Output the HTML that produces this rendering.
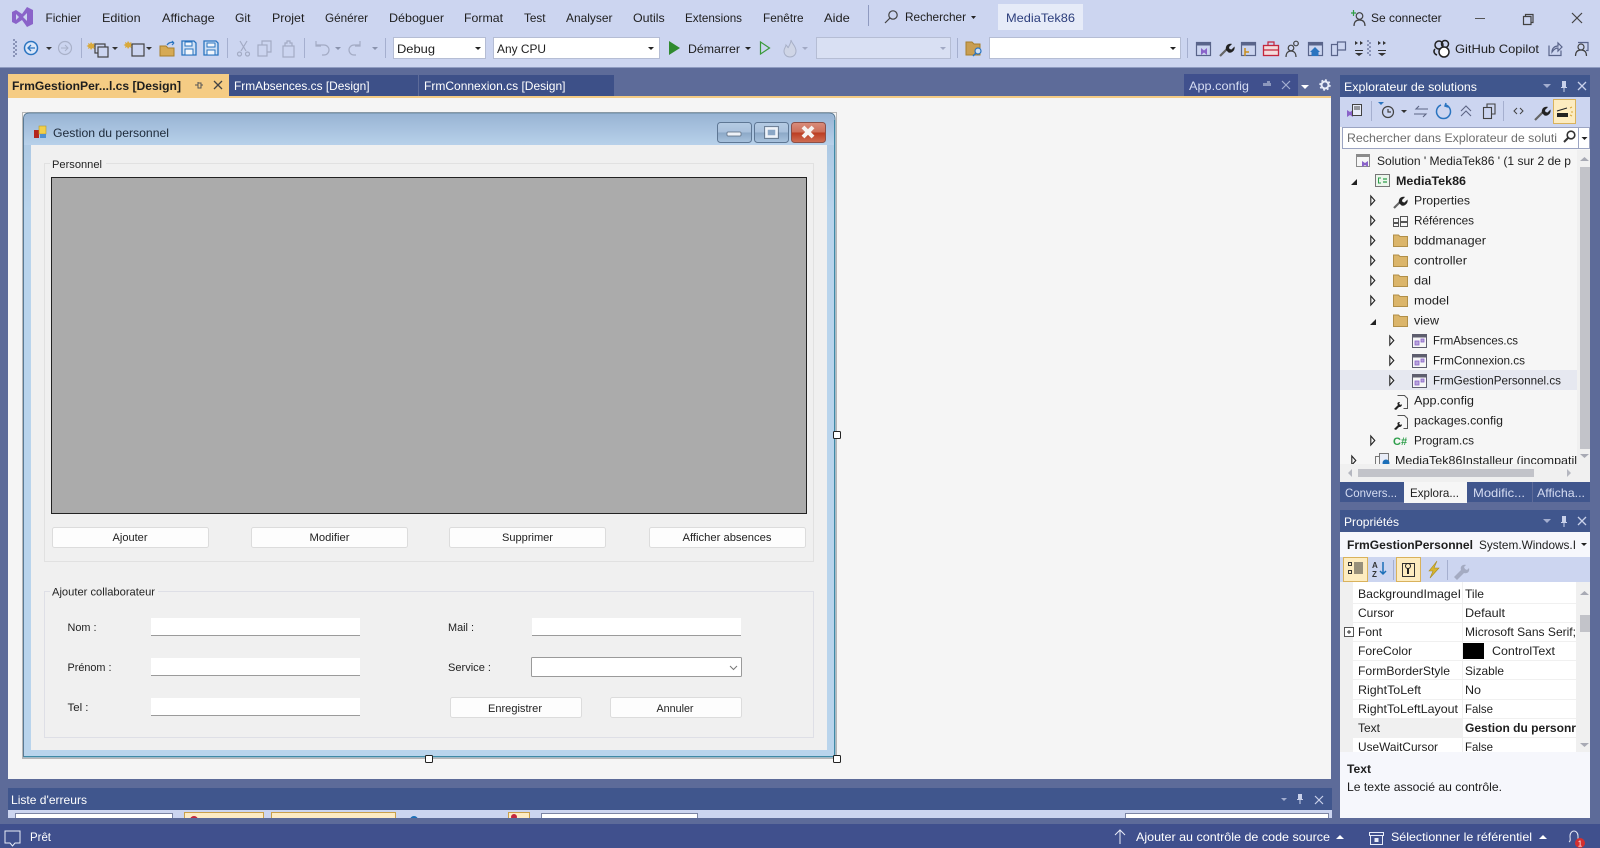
<!DOCTYPE html>
<html lang="fr">
<head>
<meta charset="utf-8">
<title>MediaTek86 - Visual Studio</title>
<style>
html,body{margin:0;padding:0;width:1600px;height:848px;overflow:hidden;background:#5d6b99}
svg{display:block;position:absolute;left:0;top:0;filter:blur(.3px)}
text{font-family:"Liberation Sans",sans-serif;font-size:12px;fill:#1e1e1e;white-space:pre}
.w text,text.w{fill:#fff}
.l text,text.l{fill:#d5dcf2}
.f text{font-size:11px;fill:#222}
.b{font-weight:bold}
.m{text-anchor:middle}
.s{fill:none;stroke:#424242;stroke-width:1.2}
.btn{fill:#fdfdfd;stroke:#dcdcdc;stroke-width:1}
</style>
</head>
<body>
<svg width="1600" height="848" viewBox="0 0 1600 848" xmlns="http://www.w3.org/2000/svg">
<defs>
<linearGradient id="cap" x1="0" y1="0" x2="0" y2="1"><stop offset="0" stop-color="#98b4d4"/><stop offset="1" stop-color="#b8d1ea"/></linearGradient>
<linearGradient id="side" x1="0" y1="0" x2="0" y2="1"><stop offset="0" stop-color="#a8c4e0"/><stop offset=".15" stop-color="#b9d4ec"/><stop offset="1" stop-color="#b9d4ec"/></linearGradient>
<linearGradient id="cb" x1="0" y1="0" x2="0" y2="1"><stop offset="0" stop-color="#b5cbe3"/><stop offset=".5" stop-color="#a8c0db"/><stop offset=".5" stop-color="#8ba7c6"/><stop offset="1" stop-color="#a9c3de"/></linearGradient>
<linearGradient id="cr" x1="0" y1="0" x2="0" y2="1"><stop offset="0" stop-color="#d98d7c"/><stop offset=".5" stop-color="#cc6e58"/><stop offset=".5" stop-color="#bb3b20"/><stop offset="1" stop-color="#cf6f55"/></linearGradient>
</defs>

<!-- chrome -->
<rect width="1600" height="848" fill="#5d6b99"/>
<rect width="1600" height="67" fill="#ccd5f0"/>
<rect y="67" width="1600" height="1" fill="#8e9bc0"/>

<!-- VS logo -->
<path d="M12 12l4-2 6 4 5-7 6 3v14l-6 3-5-7-6 4-4-2zM16 14v6l3-3zM27 13l-4 4 4 4z" fill="#8a63c9" fill-rule="evenodd"/>

<!-- menu -->
<g>
<text x="45.5" y="22" textLength="35.5" lengthAdjust="spacingAndGlyphs">Fichier</text>
<text x="102" y="22" textLength="38.6" lengthAdjust="spacingAndGlyphs">Edition</text>
<text x="162" y="22" textLength="52.7" lengthAdjust="spacingAndGlyphs">Affichage</text>
<text x="235" y="22" textLength="15.5" lengthAdjust="spacingAndGlyphs">Git</text>
<text x="272" y="22" textLength="32.4" lengthAdjust="spacingAndGlyphs">Projet</text>
<text x="325" y="22" textLength="43" lengthAdjust="spacingAndGlyphs">Générer</text>
<text x="389" y="22" textLength="55" lengthAdjust="spacingAndGlyphs">Déboguer</text>
<text x="464" y="22" textLength="39" lengthAdjust="spacingAndGlyphs">Format</text>
<text x="524" y="22" textLength="21.5" lengthAdjust="spacingAndGlyphs">Test</text>
<text x="566" y="22" textLength="46.5" lengthAdjust="spacingAndGlyphs">Analyser</text>
<text x="633" y="22" textLength="31.7" lengthAdjust="spacingAndGlyphs">Outils</text>
<text x="685" y="22" textLength="57" lengthAdjust="spacingAndGlyphs">Extensions</text>
<text x="763" y="22" textLength="40.6" lengthAdjust="spacingAndGlyphs">Fenêtre</text>
<text x="824" y="22" textLength="25.8" lengthAdjust="spacingAndGlyphs">Aide</text>
</g>
<rect x="868" y="5" width="1" height="21" fill="#8f9ac0"/>
<circle cx="893" cy="15" r="4.2" class="s"/><path d="M890 18l-5 5" class="s" stroke-width="1.6"/>
<text x="905" y="21" textLength="61" lengthAdjust="spacingAndGlyphs">Rechercher</text>
<path d="M971 16h5l-2.500 3z" fill="#222"/>
<rect x="998" y="4" width="85" height="26" fill="#e6ebf8"/>
<text x="1006" y="22" textLength="69" lengthAdjust="spacingAndGlyphs" style="fill:#2c3e7c">MediaTek86</text>

<!-- sign in + window controls -->
<path d="M1351 13h5M1353.500 10v6" stroke="#2f9e44" stroke-width="1.200" fill="none"/>
<circle cx="1359.500" cy="16" r="3.300" class="s"/><path d="M1354 26c0-4 2-6 5.500-6s5.500 2 5.500 6" class="s"/>
<text x="1371" y="22" textLength="70.600" lengthAdjust="spacingAndGlyphs">Se connecter</text>
<rect x="1475" y="18" width="10" height="1" fill="#555"/>
<path d="M1523.500 16.500h7.500v8h-7.500zM1525.500 16.500v-2h7.500v8h-2" class="s" stroke-width="1"/>
<path d="M1572 13l10 10M1582 13l-10 10" class="s" stroke-width="1"/>

<!-- toolbar -->
<g fill="#8a94b8"><rect x="13" y="39" width="2" height="2"/><rect x="15" y="41" width="2" height="2"/><rect x="13" y="43" width="2" height="2"/><rect x="15" y="45" width="2" height="2"/><rect x="13" y="47" width="2" height="2"/><rect x="15" y="49" width="2" height="2"/><rect x="13" y="51" width="2" height="2"/><rect x="15" y="53" width="2" height="2"/><rect x="13" y="55" width="2" height="2"/></g>
<circle cx="31" cy="48" r="6.500" fill="#dbe6f8" stroke="#2a74c0" stroke-width="1.500"/><path d="M35 48h-7M31 45l-3 3 3 3" fill="none" stroke="#2a74c0" stroke-width="1.300"/>
<path d="M46 47h6l-3 3z" fill="#333"/>
<circle cx="65" cy="48" r="6.500" fill="none" stroke="#a9b1c9" stroke-width="1.200"/><path d="M61 48h7M65 45l3 3-3 3" fill="none" stroke="#a9b1c9" stroke-width="1"/>
<rect x="81" y="38" width="1" height="20" fill="#a5afcf"/>
<path d="M91 42l1.500 2 2-1-.5 2 2 1-2 1 .5 2-2-1-1.500 2-1-2-2 1 .5-2-2-1 2-1-.5-2 2 1z" fill="#d9a93c"/>
<rect x="95" y="44" width="10" height="9" class="s"/><rect x="98" y="47" width="10" height="10" fill="#ccd5f0" stroke="#424242" stroke-width="1.200"/>
<path d="M112 47h6l-3 3z" fill="#333"/>
<path d="M128 41l1.500 2 2-1-.5 2 2 1-2 1 .5 2-2-1-1.500 2-1-2-2 1 .5-2-2-1 2-1-.5-2 2 1z" fill="#d9a93c"/>
<rect x="132" y="44" width="12" height="12" class="s"/>
<path d="M146 47h6l-3 3z" fill="#333"/>
<path d="M160 46h6l2 2h6v8h-14z" fill="#d6aa55" stroke="#a87f2c"/><path d="M167 45c2-3 5-3 7-2m0 0l-2-2m2 2l-2 2" fill="none" stroke="#2a74c0" stroke-width="1.200"/>
<path d="M182 41h12l2 2v12h-14z" fill="#cfe0f5" stroke="#2a74c0" stroke-width="1.300"/><rect x="185" y="42" width="7" height="4" fill="#f2f6fc" stroke="#2a74c0"/><rect x="185" y="49" width="8" height="6" fill="#f2f6fc" stroke="#2a74c0"/>
<path d="M204 41h12l2 2v12h-14z" fill="#cfe0f5" stroke="#2a74c0" stroke-width="1.300"/><rect x="207" y="43" width="8" height="4" fill="#f2f6fc" stroke="#2a74c0"/><rect x="207" y="50" width="8" height="5" fill="#f2f6fc" stroke="#2a74c0"/>
<rect x="227" y="38" width="1" height="20" fill="#a5afcf"/>
<g fill="none" stroke="#a3abc4" stroke-width="1.200">
<path d="M240 41l6 10M247 41l-6 10"/><circle cx="239.500" cy="54" r="2"/><circle cx="247.500" cy="54" r="2"/>
<rect x="258" y="45" width="9" height="11"/><path d="M262 45v-4h9v11h-4"/>
<rect x="283" y="46" width="11" height="11"/><path d="M285 46v-3h2v-2h3v2h2v3"/>
<path d="M316 45h8a5 5 0 0 1 0 10h-2M316 41v5h5"/>
<path d="M360 45h-6a5 5 0 0 0 0 10h2M360 41v5h-5"/>
</g>
<rect x="304" y="38" width="1" height="20" fill="#a5afcf"/>
<path d="M335 47h6l-3 3zM372 47h6l-3 3z" fill="#8a93ad"/>
<rect x="385" y="38" width="1" height="20" fill="#a5afcf"/>
<rect x="393.500" y="37.500" width="92" height="21" fill="#fff" stroke="#b5bdd4"/>
<text x="397" y="53" textLength="38" lengthAdjust="spacingAndGlyphs">Debug</text><path d="M475 47h6l-3 3z" fill="#222"/>
<rect x="493.500" y="37.500" width="166" height="21" fill="#fff" stroke="#b5bdd4"/>
<text x="497" y="53" textLength="49" lengthAdjust="spacingAndGlyphs">Any CPU</text><path d="M648 47h6l-3 3z" fill="#222"/>
<path d="M669 41l11 7-11 7z" fill="#2f8a2f"/>
<text x="688" y="53" textLength="52" lengthAdjust="spacingAndGlyphs">Démarrer</text><path d="M745 47h6l-3 3z" fill="#222"/>
<path d="M760.500 42l9 6-9 6z" fill="none" stroke="#3a9a3a" stroke-width="1.200"/>
<path d="M791 40c1 4 5 6 5 11 0 4-3 6-6 6s-6-2-6-6c0-3 2-4 2-6 1 1 2 2 2 3 1-2 3-5 3-8z" fill="#cfd5e6" stroke="#a8b0c7"/>
<path d="M802 47h6l-3 3z" fill="#a1a9c4"/>
<rect x="816.500" y="37.500" width="134" height="21" fill="#d9e0f3" stroke="#b5bdd4"/><path d="M940 47h6l-3 3z" fill="#a1a9c4"/>
<rect x="957" y="38" width="1" height="20" fill="#a5afcf"/>
<path d="M966 42h6l2 2h6v11h-14z" fill="#c99e52" stroke="#a87f2c"/><circle cx="978" cy="51" r="3" fill="#cfe0f5" stroke="#2a74c0" stroke-width="1.200"/><path d="M976 53l-3 3" stroke="#2a74c0" stroke-width="1.500"/>
<rect x="989.500" y="37.500" width="191" height="21" fill="#fff" stroke="#b5bdd4"/><path d="M1170 47h6l-3 3z" fill="#222"/>
<rect x="1187" y="38" width="1" height="20" fill="#a5afcf"/>
<rect x="1196.500" y="42.500" width="14" height="13" fill="none" stroke="#59648a" stroke-width="1.200"/><rect x="1196" y="42" width="15" height="3.500" fill="#59648a"/><path d="M1201 48l3 2.500 3-2.500v7l-3-2.500-3 2.500z" fill="#8a63c9"/>
<path d="M1220 56l7-7" stroke="#666" stroke-width="2.200"/><path d="M1226 50c-1-4 2-7 6-6l-3 3 .5 2 2 .5 3-3c1 4-3 7-6 6z" fill="#222"/>
<rect x="1241.500" y="42.500" width="14" height="13" fill="none" stroke="#59648a" stroke-width="1.200"/><rect x="1241" y="42" width="15" height="3.500" fill="#59648a"/><path d="M1245 48v8M1245 52h4" stroke="#c98e1c" stroke-width="1.500" fill="none"/>
<rect x="1263.500" y="45.500" width="15" height="10" fill="#f3dcdc" stroke="#c4263c" stroke-width="1.300"/><path d="M1268 45v-3h6v3M1263 50h15" fill="none" stroke="#c4263c" stroke-width="1.200"/>
<circle cx="1291" cy="48" r="2.800" class="s"/><path d="M1286 57c0-4 2-6 5-6s5 2 5 6" class="s"/><circle cx="1296" cy="43.500" r="2.300" class="s" stroke-width="1"/>
<rect x="1308.500" y="42.500" width="14" height="13" fill="none" stroke="#59648a" stroke-width="1.200"/><rect x="1308" y="42" width="15" height="3.500" fill="#59648a"/><path d="M1315 47l-5 5h1.500v4h7v-4h1.500z" fill="#2a74c0"/>
<path d="M1331.500 44.500h6v11h-6zM1337.500 46v-4h8v8h-8" fill="none" stroke="#59648a" stroke-width="1.200"/>
<path d="M1355 41l3 2-3 2zM1360 41l3 2-3 2zM1355 50h8v1h-8zM1355 53h8l-4 3zM1378 41l3 2-3 2zM1383 41l3 2-3 2zM1378 50h8v1h-8zM1378 53h8l-4 3z" fill="#333"/>
<g fill="#8a94b8"><rect x="1367" y="40" width="2" height="2"/><rect x="1369" y="42" width="2" height="2"/><rect x="1367" y="44" width="2" height="2"/><rect x="1369" y="46" width="2" height="2"/><rect x="1367" y="48" width="2" height="2"/><rect x="1369" y="50" width="2" height="2"/><rect x="1367" y="52" width="2" height="2"/><rect x="1369" y="54" width="2" height="2"/></g>
<circle cx="1439" cy="45" r="4" fill="none" stroke="#222" stroke-width="1.500"/><circle cx="1445" cy="44" r="3.500" fill="none" stroke="#222" stroke-width="1.500"/><circle cx="1444" cy="52" r="5" fill="#fff" stroke="#222" stroke-width="1.500"/><path d="M1435 49c-2 2-1 5 2 6" fill="none" stroke="#222" stroke-width="1.500"/>
<text x="1455" y="53" textLength="84" lengthAdjust="spacingAndGlyphs">GitHub Copilot</text>
<path d="M1549 45.500v10h12v-5M1552 52c0-4 3-6 6-6v-3l4 4-4 4v-3c-2 0-4 1-6 4z" fill="none" stroke="#59648a" stroke-width="1.200"/>
<circle cx="1581" cy="47" r="3" class="s"/><path d="M1575.500 56c0-4 2-6 5.500-6s5.500 2 5.500 6" class="s"/><path d="M1578 42.500h10v8h-2" fill="none" stroke="#59648a" stroke-width="1.200"/>

<!-- doc tabs -->
<rect x="8" y="74" width="221" height="22" fill="#f5cc84"/>
<text x="12" y="90" textLength="169" lengthAdjust="spacingAndGlyphs" class="b">FrmGestionPer...l.cs [Design]</text>
<path d="M195 85h3M198 82v6h3v-5h-3M201 85h2" fill="none" stroke="#555" stroke-width="1"/>
<path d="M214 81l8 8M222 81l-8 8" stroke="#444" stroke-width="1.300"/>
<rect x="229" y="75" width="385" height="21" fill="#3d5088"/>
<rect x="418" y="75" width="1" height="21" fill="#5d6b99"/>
<text x="234" y="90" textLength="135.500" lengthAdjust="spacingAndGlyphs" class="w">FrmAbsences.cs [Design]</text>
<text x="424" y="90" textLength="141.500" lengthAdjust="spacingAndGlyphs" class="w">FrmConnexion.cs [Design]</text>
<rect x="1184" y="74" width="114" height="22" fill="#40508d"/>
<text x="1189" y="90" textLength="60" lengthAdjust="spacingAndGlyphs" class="l">App.config</text>
<path d="M1263 83h4v-2h3v2h1v3h-8z" fill="#8c97bd"/>
<path d="M1282 81l8 8M1290 81l-8 8" stroke="#a3aed0" stroke-width="1.200"/>
<path d="M1301 85h8l-4 4z" fill="#fff"/>
<circle cx="1325" cy="85" r="3.500" fill="none" stroke="#e8ecf8" stroke-width="2"/><circle cx="1325" cy="85" r="5" fill="none" stroke="#e8ecf8" stroke-width="1.400" stroke-dasharray="2 1.900"/>

<!-- document well -->
<rect x="8" y="96" width="1323" height="2" fill="#f5cc84"/>
<rect x="8" y="98" width="1323" height="681" fill="#f5f5f5"/>

<!-- winform window -->
<rect x="22.500" y="112.500" width="814" height="646" fill="none" stroke="#777" stroke-dasharray="1 1"/>
<path d="M23.500 757V119q0-6 6-6H829q6 0 6 6V757z" fill="url(#side)" stroke="#5a7a94"/>
<path d="M24 145V119q0-5 5-5H829q5 0 5 5V145z" fill="url(#cap)"/>
<rect x="31" y="145" width="796" height="605" fill="#f0f0f0"/>
<rect x="24" y="756" width="811" height="1.200" fill="#3f8aa6"/>
<rect x="834" y="120" width="1.200" height="637" fill="#3f8aa6"/>
<rect x="34" y="130" width="5" height="8" fill="#b3261e"/><rect x="39" y="126" width="7" height="8" fill="#f2cf4a" stroke="#b59a2a" stroke-width=".6"/><rect x="40" y="134" width="6" height="4" fill="#4f8fd0"/>
<text x="53" y="137" textLength="116" lengthAdjust="spacingAndGlyphs" style="fill:#1d2a3a">Gestion du personnel</text>

<rect x="717.500" y="122.500" width="34" height="20" rx="3" fill="url(#cb)" stroke="#5e7794"/>
<rect x="727" y="132" width="14" height="4" rx="1" fill="#eef2f8" stroke="#55657a" stroke-width=".7"/>
<rect x="754.500" y="122.500" width="34" height="20" rx="3" fill="url(#cb)" stroke="#5e7794"/>
<rect x="766.500" y="128.500" width="10" height="8" fill="#8ba7c6" stroke="#f0f3f8" stroke-width="2.500"/><rect x="764.500" y="126.500" width="14" height="12" fill="none" stroke="#55657a" stroke-width=".7"/>
<rect x="791.500" y="122.500" width="34" height="20" rx="3" fill="url(#cr)" stroke="#8c5048"/>
<path d="M803 127l10 10M813 127l-10 10" stroke="#f6f3f2" stroke-width="4"/>

<!-- form content -->
<g class="f">
<rect x="44.500" y="163.500" width="769" height="398" fill="none" stroke="#e1e1e1"/>
<rect x="50" y="158" width="56" height="12" fill="#f0f0f0"/>
<text x="52" y="168" textLength="50" lengthAdjust="spacingAndGlyphs">Personnel</text>
<rect x="51.500" y="177.500" width="755" height="336" fill="#ababab" stroke="#222"/>
<rect x="52.500" y="527.500" width="156" height="20" rx="2" class="btn"/><text x="130" y="541" class="m" textLength="35" lengthAdjust="spacingAndGlyphs">Ajouter</text>
<rect x="251.500" y="527.500" width="156" height="20" rx="2" class="btn"/><text x="329.500" y="541" class="m" textLength="40" lengthAdjust="spacingAndGlyphs">Modifier</text>
<rect x="449.500" y="527.500" width="156" height="20" rx="2" class="btn"/><text x="527.500" y="541" class="m" textLength="51" lengthAdjust="spacingAndGlyphs">Supprimer</text>
<rect x="649.500" y="527.500" width="156" height="20" rx="2" class="btn"/><text x="727" y="541" class="m" textLength="89" lengthAdjust="spacingAndGlyphs">Afficher absences</text>

<rect x="44.500" y="591.500" width="769" height="146" fill="none" stroke="#dedfe6"/>
<rect x="50" y="586" width="108" height="12" fill="#f0f0f0"/>
<text x="52" y="595.500" textLength="103" lengthAdjust="spacingAndGlyphs">Ajouter collaborateur</text>
<text x="67.500" y="631" textLength="29" lengthAdjust="spacingAndGlyphs">Nom :</text>
<text x="67.500" y="671" textLength="44" lengthAdjust="spacingAndGlyphs">Prénom :</text>
<text x="67.500" y="711" textLength="21" lengthAdjust="spacingAndGlyphs">Tel :</text>
<rect x="151" y="618" width="209" height="17" fill="#fff"/><rect x="151" y="635" width="209" height="1" fill="#9b9b9b"/>
<rect x="151" y="658" width="209" height="17" fill="#fff"/><rect x="151" y="675" width="209" height="1" fill="#9b9b9b"/>
<rect x="151" y="698" width="209" height="17" fill="#fff"/><rect x="151" y="715" width="209" height="1" fill="#9b9b9b"/>
<text x="448" y="631" textLength="26" lengthAdjust="spacingAndGlyphs">Mail :</text>
<text x="448" y="671" textLength="43" lengthAdjust="spacingAndGlyphs">Service :</text>
<rect x="532" y="618" width="209" height="17" fill="#fff"/><rect x="532" y="635" width="209" height="1" fill="#9b9b9b"/>
<rect x="531.500" y="657.500" width="210" height="19" rx="1" fill="#fff" stroke="#9a9a9a"/>
<path d="M730 666l3.500 3.500 3.500-3.500" fill="none" stroke="#777"/>
<rect x="450.500" y="697.500" width="131" height="20" rx="2" class="btn"/><text x="515" y="712" class="m" textLength="54" lengthAdjust="spacingAndGlyphs">Enregistrer</text>
<rect x="610.500" y="697.500" width="131" height="20" rx="2" class="btn"/><text x="675" y="712" class="m" textLength="37" lengthAdjust="spacingAndGlyphs">Annuler</text>
</g>
<!-- selection handles -->
<g fill="#fff" stroke="#222"><rect x="425.500" y="755.500" width="7" height="7" rx="1"/><rect x="833.500" y="755.500" width="7" height="7" rx="1"/><rect x="833.500" y="431.500" width="7" height="7" rx="1"/></g>

<!-- error list -->
<rect x="8" y="788" width="1324" height="22" fill="#40568d"/>
<text x="11" y="804" textLength="76" lengthAdjust="spacingAndGlyphs" class="w">Liste d'erreurs</text>
<path d="M1281 798h6l-3 3z" fill="#a3aed0"/>
<path d="M1298 794h4v5h1v1h-2.500v4h-1v-4H1297v-1h1z" fill="#c9d1ea"/>
<path d="M1315 796l8 8M1323 796l-8 8" stroke="#c9d1ea" stroke-width="1.200"/>
<rect x="8" y="810" width="1324" height="8" fill="#ccd5f0"/>
<rect x="15.500" y="813.500" width="157" height="6" fill="#fff" stroke="#7b84a3"/>
<rect x="184.500" y="812.500" width="79" height="7" fill="#fdebc4" stroke="#c9a04c"/><circle cx="194" cy="820" r="4" fill="#c4263c"/>
<rect x="271.500" y="812.500" width="124" height="7" fill="#fdebc4" stroke="#c9a04c"/>
<circle cx="414" cy="820" r="4" fill="#1c6fb8"/>
<rect x="508.500" y="812.500" width="21" height="7" fill="#fdebc4" stroke="#c9a04c"/><circle cx="514" cy="817" r="3" fill="#c4263c"/>
<rect x="541.500" y="813.500" width="156" height="6" fill="#fff" stroke="#7b84a3"/>
<rect x="1125.500" y="813.500" width="203" height="6" fill="#fff" stroke="#7b84a3"/>
<rect x="0" y="818" width="1340" height="7" fill="#5d6b99"/>

<!-- solution explorer -->
<rect x="1340" y="75" width="250" height="22" fill="#40568d"/>
<text x="1344" y="91" textLength="133" lengthAdjust="spacingAndGlyphs" class="w">Explorateur de solutions</text>
<path d="M1543 84h8l-4 4z" fill="#a3aed0"/>
<path d="M1562 81h4v6h1v1h-2.500v4h-1v-4H1561v-1h1z" fill="#c9d1ea"/>
<path d="M1578 82l8 8M1586 82l-8 8" stroke="#c9d1ea" stroke-width="1.300"/>
<rect x="1340" y="97" width="250" height="385" fill="#f6f6f6"/>
<rect x="1340" y="97" width="250" height="30" fill="#ccd5f0"/>
<path d="M1347 110l3 2 3-2v7l-3-2-3 2z" fill="#8a63c9"/><rect x="1352.500" y="104.500" width="9" height="11" fill="#e8ecf8" stroke="#424242"/><path d="M1354 107h6M1354 109h6" stroke="#424242"/>
<rect x="1371" y="101" width="1" height="20" fill="#a5afcf"/>
<path d="M1378 102h6l-3 3z" fill="#2a74c0"/><circle cx="1388" cy="112" r="5.500" class="s"/><path d="M1388 109v3h3" class="s" stroke-width="1"/>
<path d="M1401 110h6l-3 3z" fill="#333"/>
<path d="M1428 109h-12l3-3M1414 114h12l-3 3" fill="none" stroke="#5d6584" stroke-width="1.100"/>
<path d="M1441 105a7 7 0 1 0 5 0M1446 103l-1 3 3 1" fill="none" stroke="#2a74c0" stroke-width="1.500"/>
<path d="M1461 111l5-5 5 5M1461 116l5-5 5 5" fill="none" stroke="#5d6584" stroke-width="1.100"/>
<rect x="1483.500" y="107.500" width="8" height="11" fill="#ccd5f0" stroke="#424242" stroke-width="1.100"/><path d="M1487 107v-3h8v10h-3" fill="none" stroke="#424242" stroke-width="1.100"/>
<rect x="1503" y="101" width="1" height="20" fill="#a5afcf"/>
<path d="M1517 108l-3 3 3 3M1520 108l3 3-3 3" fill="none" stroke="#424242"/>
<path d="M1535 120l8-8" stroke="#666" stroke-width="2.200"/><path d="M1542 113c-1-4 2-7 6-6l-3 3 .5 2 2 .5 3-3c1 4-3 7-6 6z" fill="#222"/>
<rect x="1553.500" y="99.500" width="22" height="24" fill="#fdecc0" stroke="#d9b25c"/>
<rect x="1557" y="113" width="11" height="4" fill="#222"/><path d="M1557 111l10-3" stroke="#222"/><path d="M1570 108l2-1M1571 112h2M1570 115l2 1" stroke="#d9a93c"/>

<rect x="1342.500" y="127.500" width="247" height="21" fill="#fff" stroke="#9ba4c2"/>
<rect x="1578" y="128" width="1" height="20" fill="#9ba4c2"/>
<text x="1347" y="142" textLength="210" lengthAdjust="spacingAndGlyphs" style="fill:#6d6d6d">Rechercher dans Explorateur de soluti</text>
<circle cx="1571" cy="135" r="3.800" fill="none" stroke="#333" stroke-width="1.600"/><path d="M1568 138l-4 4" stroke="#333" stroke-width="2"/>
<path d="M1581.500 137h6l-3 3z" fill="#222"/>

<rect x="1340" y="370" width="237" height="20" fill="#e6e8f0"/>

<!-- tree icons -->
<g fill="none">
<rect x="1356.500" y="154.500" width="13" height="12" stroke="#8a8a8a" fill="#f6f6f6"/><rect x="1356" y="154" width="14" height="3" fill="#8a8a8a"/><path d="M1362 161l3 2 3-2v6l-3-2-3 2z" fill="#8a63c9"/>
<rect x="1375.500" y="174.500" width="14" height="12" stroke="#777" fill="#ecf6ec"/>
<path d="M1381 178h-2.500v5h2.500" stroke="#2d9e4a"/><path d="M1383 179h4M1383 182h4" stroke="#2d9e4a" stroke-width="1.200"/>
</g>
<path d="M1394 208l6-6" stroke="#666" stroke-width="2.200"/><path d="M1399 203c-1-4 2-7 6-6l-3 3 .5 2 2 .5 3-3c1 4-3 7-6 6z" fill="#222"/>
<g fill="none" stroke="#555"><rect x="1393.500" y="218.500" width="5" height="4"/><rect x="1393.500" y="223.500" width="5" height="3"/><rect x="1400.500" y="216.500" width="7" height="5"/><rect x="1400.500" y="222.500" width="7" height="4"/></g>
<g fill="#dbb56a" stroke="#b18f48">
<path d="M1393.500 235h5l1.500 1.500h7.500v10h-14z"/>
<path d="M1393.500 255h5l1.500 1.500h7.500v10h-14z"/>
<path d="M1393.500 275h5l1.500 1.500h7.500v10h-14z"/>
<path d="M1393.500 295h5l1.500 1.500h7.500v10h-14z"/>
<path d="M1393.500 315h5l1.500 1.500h7.500v10h-14z"/>
</g>
<g fill="#f6f6f6" stroke="#5e5e6e">
<rect x="1412.500" y="334.500" width="14" height="13"/><rect x="1412.500" y="354.500" width="14" height="13"/><rect x="1412.500" y="374.500" width="14" height="13"/>
</g>
<g fill="#5e5e6e"><rect x="1412" y="334" width="15" height="3.500"/><rect x="1412" y="354" width="15" height="3.500"/><rect x="1412" y="374" width="15" height="3.500"/></g>
<g fill="#b9a6db" stroke="#8a63c9" stroke-width=".8"><rect x="1415" y="341" width="4" height="4"/><rect x="1421" y="339" width="3" height="3"/><rect x="1415" y="361" width="4" height="4"/><rect x="1421" y="359" width="3" height="3"/><rect x="1415" y="381" width="4" height="4"/><rect x="1421" y="379" width="3" height="3"/></g>
<path d="M1397.500 395.500h7l3 3v10h-4" fill="none" stroke="#555"/><path d="M1394 409l4-4c-1-1-1-3 2-3l-1 2 2 1 1-1c0 2-1 3-3 3l-3 3z" fill="#222"/>
<path d="M1397.500 415.500h7l3 3v10h-4" fill="none" stroke="#555"/><path d="M1394 429l4-4c-1-1-1-3 2-3l-1 2 2 1 1-1c0 2-1 3-3 3l-3 3z" fill="#222"/>
<text x="1393" y="445" style="font-size:11px;fill:#2d9e4a" class="b">C#</text>
<rect x="1375.500" y="456.500" width="8" height="10" fill="#f6f6f6" stroke="#777"/><rect x="1379.500" y="453.500" width="9" height="12" fill="#e9edf8" stroke="#777"/><circle cx="1386" cy="463" r="3.500" fill="#1c6fb8"/>

<!-- tree arrows -->
<g fill="#f6f6f6" stroke="#222" stroke-width="1.100" transform="translate(-.7 -.5)">
<path d="M1371.500 196.500l4 4.500-4 4.500z"/><path d="M1371.500 216.500l4 4.500-4 4.500z"/><path d="M1371.500 236.500l4 4.500-4 4.500z"/><path d="M1371.500 256.500l4 4.500-4 4.500z"/><path d="M1371.500 276.500l4 4.500-4 4.500z"/><path d="M1371.500 296.500l4 4.500-4 4.500z"/>
<path d="M1390.500 336.500l4 4.500-4 4.500z"/><path d="M1390.500 356.500l4 4.500-4 4.500z"/><path d="M1390.500 376.500l4 4.500-4 4.500z"/>
<path d="M1371.500 436.500l4 4.500-4 4.500z"/><path d="M1352.500 456.500l4 4.500-4 4.500z"/>
</g>
<path d="M1351 185l6-6v6zM1370 325l6-6v6z" fill="#222"/>

<!-- tree text -->
<g transform="translate(0 -.6)">
<text x="1377" y="165.500" textLength="194" lengthAdjust="spacingAndGlyphs">Solution ' MediaTek86 ' (1 sur 2 de p</text>
<text x="1396" y="185.500" textLength="70" lengthAdjust="spacingAndGlyphs" class="b">MediaTek86</text>
<text x="1414" y="205" textLength="56" lengthAdjust="spacingAndGlyphs">Properties</text>
<text x="1414" y="225" textLength="60" lengthAdjust="spacingAndGlyphs">Références</text>
<text x="1414" y="245" textLength="72" lengthAdjust="spacingAndGlyphs">bddmanager</text>
<text x="1414" y="265" textLength="53" lengthAdjust="spacingAndGlyphs">controller</text>
<text x="1414" y="285" textLength="17" lengthAdjust="spacingAndGlyphs">dal</text>
<text x="1414" y="305" textLength="35" lengthAdjust="spacingAndGlyphs">model</text>
<text x="1414" y="325" textLength="25" lengthAdjust="spacingAndGlyphs">view</text>
<text x="1433" y="345" textLength="85" lengthAdjust="spacingAndGlyphs">FrmAbsences.cs</text>
<text x="1433" y="365" textLength="92" lengthAdjust="spacingAndGlyphs">FrmConnexion.cs</text>
<text x="1433" y="385" textLength="128" lengthAdjust="spacingAndGlyphs">FrmGestionPersonnel.cs</text>
<text x="1414" y="405" textLength="60" lengthAdjust="spacingAndGlyphs">App.config</text>
<text x="1414" y="425" textLength="89" lengthAdjust="spacingAndGlyphs">packages.config</text>
<text x="1414" y="445" textLength="60" lengthAdjust="spacingAndGlyphs">Program.cs</text>
<text x="1395" y="465" textLength="182" lengthAdjust="spacingAndGlyphs">MediaTek86Installeur (incompatil</text>
</g>
<rect x="1340" y="464" width="250" height="18" fill="#f0f0f0"/>
<rect x="1358" y="469" width="176" height="8" fill="#c2c3c9"/>
<path d="M1352 469v8l-4-4zM1567 469v8l4-4z" fill="#b5b7c0"/>
<rect x="1577" y="150" width="13" height="314" fill="#f0f0f0"/>
<rect x="1580" y="167" width="10" height="282" fill="#c2c3c9"/>
<path d="M1580 161h9l-4.500-4zM1580 454h9l-4.500 4z" fill="#a8aab4"/>

<!-- panel tabs -->
<rect x="1340" y="482" width="250" height="20" fill="#40568d"/>
<rect x="1404" y="482" width="63" height="21" fill="#f6f6f6"/>
<rect x="1532" y="482" width="1" height="20" fill="#5d6b99"/>
<text x="1345" y="497" textLength="52" lengthAdjust="spacingAndGlyphs" class="l">Convers...</text>
<text x="1410" y="497" textLength="49" lengthAdjust="spacingAndGlyphs">Explora...</text>
<text x="1473" y="497" textLength="52" lengthAdjust="spacingAndGlyphs" class="l">Modific...</text>
<text x="1537" y="497" textLength="48" lengthAdjust="spacingAndGlyphs" class="l">Afficha...</text>

<!-- properties -->
<rect x="1340" y="510" width="250" height="22" fill="#40568d"/>
<text x="1344" y="526" textLength="55" lengthAdjust="spacingAndGlyphs" class="w">Propriétés</text>
<path d="M1543 519h8l-4 4z" fill="#a3aed0"/>
<path d="M1562 516h4v6h1v1h-2.500v4h-1v-4H1561v-1h1z" fill="#c9d1ea"/>
<path d="M1578 517l8 8M1586 517l-8 8" stroke="#c9d1ea" stroke-width="1.300"/>
<rect x="1340" y="532" width="250" height="286" fill="#f6f7fc"/>
<text x="1347" y="549" textLength="126" lengthAdjust="spacingAndGlyphs" class="b">FrmGestionPersonnel</text>
<text x="1479" y="549" textLength="97" lengthAdjust="spacingAndGlyphs">System.Windows.I</text>
<path d="M1581 543h6l-3 3z" fill="#222"/>
<rect x="1340" y="557" width="250" height="25" fill="#ccd5f0"/>
<rect x="1343.500" y="557.500" width="24" height="24" fill="#fdecc0" stroke="#d9b25c"/>
<g fill="none" stroke="#333"><rect x="1348.500" y="562.500" width="3" height="3"/><rect x="1348.500" y="570.500" width="3" height="3"/></g>
<path d="M1354 563h9M1354 565h9M1354 567h9M1354 569h9M1354 571h9M1354 573h9" stroke="#333" stroke-width="1"/>
<text x="1372" y="568" style="font-size:8px;fill:#333" class="b">A</text><text x="1372" y="577" style="font-size:8px;fill:#333" class="b">Z</text>
<path d="M1383 562v12M1380 571l3 3 3-3" fill="none" stroke="#1c6fb8" stroke-width="1.500"/>
<rect x="1393" y="560" width="1" height="20" fill="#a5afcf"/>
<rect x="1396.500" y="557.500" width="24" height="24" fill="#fdecc0" stroke="#d9b25c"/>
<rect x="1402.500" y="563.500" width="12" height="13" fill="none" stroke="#333"/><circle cx="1408" cy="566" r="2.500" fill="#fdecc0" stroke="#222"/><rect x="1407" y="568" width="2" height="6" fill="#222"/>
<path d="M1437 561l-8 10h4l-3 7 9-10h-5l3-7z" fill="#d8b52f" stroke="#a88c1f" stroke-width=".6"/>
<rect x="1447" y="560" width="1" height="20" fill="#a5afcf"/>
<path d="M1454 577l7-7c-1-3 1-6 5-5l-2 2 1 2 2 1 2-2c1 4-2 6-5 5l-7 7z" fill="#a4abc2"/>

<rect x="1340" y="582" width="250" height="170" fill="#fff"/>
<rect x="1340" y="582" width="13" height="170" fill="#f0f0f0"/>
<rect x="1353" y="719" width="109" height="18" fill="#f0f0f0"/>
<g fill="#f0f0f0">
<rect x="1353" y="603" width="223" height="1"/><rect x="1353" y="622" width="223" height="1"/><rect x="1353" y="641" width="223" height="1"/><rect x="1353" y="660" width="223" height="1"/><rect x="1353" y="679" width="223" height="1"/><rect x="1353" y="699" width="223" height="1"/><rect x="1353" y="718" width="223" height="1"/><rect x="1353" y="737" width="223" height="1"/>
<rect x="1462" y="582" width="1" height="170"/>
</g>
<rect x="1344.500" y="627.500" width="9" height="9" fill="#fff" stroke="#555"/><path d="M1347 632h4M1349 630v4" stroke="#333"/>
<g>
<text x="1358" y="598" textLength="103" lengthAdjust="spacingAndGlyphs">BackgroundImageI</text><text x="1465" y="598" textLength="19" lengthAdjust="spacingAndGlyphs">Tile</text>
<text x="1358" y="617" textLength="36" lengthAdjust="spacingAndGlyphs">Cursor</text><text x="1465" y="617" textLength="40" lengthAdjust="spacingAndGlyphs">Default</text>
<text x="1358" y="636" textLength="24" lengthAdjust="spacingAndGlyphs">Font</text><text x="1465" y="636" textLength="111" lengthAdjust="spacingAndGlyphs">Microsoft Sans Serif;</text>
<text x="1358" y="655" textLength="54" lengthAdjust="spacingAndGlyphs">ForeColor</text><rect x="1463" y="643" width="21" height="16" fill="#000"/><text x="1492" y="655" textLength="63" lengthAdjust="spacingAndGlyphs">ControlText</text>
<text x="1358" y="675" textLength="92" lengthAdjust="spacingAndGlyphs">FormBorderStyle</text><text x="1465" y="675" textLength="39" lengthAdjust="spacingAndGlyphs">Sizable</text>
<text x="1358" y="694" textLength="63" lengthAdjust="spacingAndGlyphs">RightToLeft</text><text x="1465" y="694" textLength="16" lengthAdjust="spacingAndGlyphs">No</text>
<text x="1358" y="713" textLength="100" lengthAdjust="spacingAndGlyphs">RightToLeftLayout</text><text x="1465" y="713" textLength="28" lengthAdjust="spacingAndGlyphs">False</text>
<text x="1358" y="732" textLength="22" lengthAdjust="spacingAndGlyphs">Text</text><text x="1465" y="732" textLength="111" lengthAdjust="spacingAndGlyphs" class="b">Gestion du personr</text>
<text x="1358" y="751" textLength="80" lengthAdjust="spacingAndGlyphs">UseWaitCursor</text><text x="1465" y="751" textLength="28" lengthAdjust="spacingAndGlyphs">False</text>
</g>
<rect x="1340" y="752" width="250" height="66" fill="#f6f7fc"/>
<rect x="1576" y="582" width="14" height="170" fill="#f0f0f0"/>
<rect x="1580" y="615" width="10" height="17" fill="#c2c3c9"/>
<path d="M1580 595h9l-4.500-4zM1580 743h9l-4.500 4z" fill="#a8aab4"/>
<text x="1347" y="773" textLength="24" lengthAdjust="spacingAndGlyphs" class="b">Text</text>
<text x="1347" y="791" textLength="155" lengthAdjust="spacingAndGlyphs">Le texte associé au contrôle.</text>

<!-- status bar -->
<rect x="0" y="818" width="1600" height="6" fill="#5d6b99"/>
<rect x="0" y="824" width="1600" height="24" fill="#40508d"/>
<path d="M5 831h15v12h-5l-2.500 3-2.500-3H5z" fill="none" stroke="#e8ecf8"/>
<text x="30" y="841" textLength="21" lengthAdjust="spacingAndGlyphs" class="w">Prêt</text>
<path d="M1120 844v-14M1115 835l5-5 5 5" fill="none" stroke="#e8ecf8"/>
<text x="1136" y="841" textLength="194" lengthAdjust="spacingAndGlyphs" class="w">Ajouter au contrôle de code source</text>
<path d="M1336 839h8l-4-4z" fill="#fff"/>
<rect x="1369.500" y="832.500" width="14" height="3" fill="none" stroke="#e8ecf8"/><rect x="1370.500" y="835.500" width="12" height="9" fill="none" stroke="#e8ecf8"/><rect x="1374.500" y="838" width="4" height="4" fill="#e8ecf8"/>
<text x="1391" y="841" textLength="141" lengthAdjust="spacingAndGlyphs" class="w">Sélectionner le référentiel</text>
<path d="M1539 839h8l-4-4z" fill="#fff"/>
<path d="M1569 842c2-1 1-3 1-6 0-3 2-5 4-5s4 2 4 5v5" fill="none" stroke="#e8ecf8"/>
<circle cx="1580" cy="843" r="5" fill="#d32f2f"/><text x="1580" y="846.500" class="m w" style="font-size:8px">1</text>
</svg>
</body>
</html>
